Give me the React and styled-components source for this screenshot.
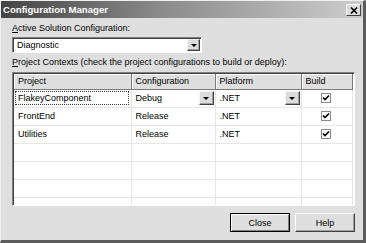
import React from 'react';
import styled, { createGlobalStyle } from 'styled-components';

const GlobalStyle = createGlobalStyle`
  html, body {
    margin: 0;
    padding: 0;
    background: #dfdfdf;
  }
  body {
    font-family: "Liberation Sans", Arial, sans-serif;
    font-size: 9px;
    color: #000;
  }
`;

const Window = styled.div`
  width: 366px;
  height: 243px;
  box-sizing: border-box;
  background: #dfdfdf;
  border-top: 1px solid #f0f0f0;
  border-left: 1px solid #f0f0f0;
  border-right: 3px solid #5c5c5c;
  border-bottom: 3px solid #5c5c5c;
  display: flex;
  flex-direction: column;
`;

const TitleBar = styled.div`
  height: 17px;
  display: flex;
  align-items: center;
  justify-content: space-between;
  padding: 0 2px 0 2px;
  background: linear-gradient(to right, #444 0%, #8c8c8c 45%, #cdcdcd 100%);
`;

const Title = styled.span`
  color: #fff;
  font-weight: bold;
  font-size: 9.6px;
`;

const CloseBox = styled.div`
  width: 15px;
  height: 12px;
  box-sizing: border-box;
  background: #dcdcdc;
  border: 1px solid;
  border-color: #fff #404040 #404040 #fff;
  display: flex;
  align-items: center;
  justify-content: center;
  margin-top: 1px;
`;

const Body = styled.div`
  flex: 1;
  display: flex;
  flex-direction: column;
  padding: 0 9px 0 11px;
`;

const Label = styled.div`
  height: 11px;
  line-height: 11px;
  margin-top: ${p => p.$top}px;
  white-space: nowrap;
`;

const Combo = styled.div`
  margin-top: 3px;
  width: 190px;
  height: 16px;
  box-sizing: border-box;
  background: #fff;
  border: 1px solid;
  border-color: #808080 #fff #fff #808080;
  box-shadow: inset 1px 1px 0 #404040;
  display: flex;
  align-items: center;
  justify-content: space-between;
  padding: 0 1px 0 4px;
`;

const DropButton = styled.div`
  width: ${p => p.$w}px;
  height: ${p => p.$h}px;
  box-sizing: border-box;
  background: #dcdcdc;
  border: 1px solid;
  border-color: #f4f4f4 #404040 #404040 #f4f4f4;
  box-shadow: inset -1px -1px 0 #a0a0a0;
  display: flex;
  align-items: center;
  justify-content: center;
  flex-shrink: 0;
`;

const Arrow = styled.span`
  width: 0;
  height: 0;
  border-left: 3px solid transparent;
  border-right: 3px solid transparent;
  border-top: 3px solid #000;
`;

const GridBox = styled.div`
  margin-top: 4px;
  width: 343px;
  height: 134px;
  box-sizing: border-box;
  background: #fff;
  border: 1px solid;
  border-color: #808080 #fff #fff #808080;
  box-shadow: inset 1px 1px 0 #404040;
  padding: 1px 0 0 1px;
  overflow: hidden;
`;

const Table = styled.table`
  border-collapse: collapse;
  table-layout: fixed;
  width: 338px;
`;

const Head = styled.th`
  width: ${p => p.$w}px;
  height: 15px;
  box-sizing: border-box;
  padding: 0 0 0 4px;
  text-align: left;
  font-weight: normal;
  background: #dfdfdf;
  border-right: 1px solid #7a7a7a;
  border-bottom: 1px solid #7a7a7a;
  box-shadow: inset 1px 1px 0 #fff;
  white-space: nowrap;
`;

const Cell = styled.td`
  height: 18px;
  box-sizing: border-box;
  padding: 0 1px 0 ${p => (p.$center ? 0 : 4)}px;
  border-right: 1px solid #e6e6e6;
  border-bottom: 1px solid #e6e6e6;
  text-align: ${p => (p.$center ? 'center' : 'left')};
  vertical-align: middle;
  white-space: nowrap;
`;

const FocusText = styled.div`
  margin-left: -3px;
  margin-right: 1px;
  height: 14px;
  line-height: 12px;
  box-sizing: border-box;
  padding-left: 2px;
  border: 1px dotted #404040;
`;

const CellCombo = styled.div`
  display: flex;
  align-items: center;
  justify-content: space-between;
`;

const Check = styled.span`
  display: inline-flex;
  align-items: center;
  justify-content: center;
  width: 10px;
  height: 10px;
  box-sizing: border-box;
  border: 1px solid #8a8a8a;
  background: #fff;
  vertical-align: middle;
`;

const Footer = styled.div`
  margin-top: 7px;
  width: 343px;
  display: flex;
  justify-content: flex-end;
  gap: 5px;
`;

const Button = styled.button`
  width: 60px;
  height: 19px;
  box-sizing: border-box;
  font-family: inherit;
  font-size: 9px;
  color: #000;
  background: #dfdfdf;
  padding: 0;
  border: 1px solid;
  border-color: ${p => (p.$default ? '#000' : '#fff #404040 #404040 #fff')};
  box-shadow: ${p =>
    p.$default
      ? 'inset 1px 1px 0 #fff, inset -1px -1px 0 #808080'
      : 'inset -1px -1px 0 #a0a0a0'};
`;

function CheckMark() {
  return (
    <svg width="8" height="8" viewBox="0 0 8 8">
      <path d="M1 3.5 L3 5.5 L7 1.5" stroke="#000" strokeWidth="1.6" fill="none" />
    </svg>
  );
}

const rows = [
  { project: 'FlakeyComponent', config: 'Debug', platform: '.NET', active: true },
  { project: 'FrontEnd', config: 'Release', platform: '.NET' },
  { project: 'Utilities', config: 'Release', platform: '.NET' },
];

export default function App() {
  return (
    <>
      <GlobalStyle />
      <Window>
        <TitleBar>
          <Title>Configuration Manager</Title>
          <CloseBox>
            <svg width="8" height="7" viewBox="0 0 8 7">
              <path d="M1 0.5 L7 6.5 M7 0.5 L1 6.5" stroke="#000" strokeWidth="1.5" />
            </svg>
          </CloseBox>
        </TitleBar>
        <Body>
          <Label $top={5}>
            <u>A</u>ctive Solution Configuration:
          </Label>
          <Combo>
            <span>Diagnostic</span>
            <DropButton $w={13} $h={12}>
              <Arrow />
            </DropButton>
          </Combo>
          <Label $top={4}>
            <u>P</u>roject Contexts (check the project configurations to build or deploy):
          </Label>
          <GridBox>
            <Table>
              <thead>
                <tr>
                  <Head $w={117}>Project</Head>
                  <Head $w={84}>Configuration</Head>
                  <Head $w={86}>Platform</Head>
                  <Head $w={51}>Build</Head>
                </tr>
              </thead>
              <tbody>
                {rows.map(r => (
                  <tr key={r.project}>
                    <Cell>{r.active ? <FocusText>{r.project}</FocusText> : r.project}</Cell>
                    <Cell>
                      {r.active ? (
                        <CellCombo>
                          {r.config}
                          <DropButton $w={15} $h={14}>
                            <Arrow />
                          </DropButton>
                        </CellCombo>
                      ) : (
                        r.config
                      )}
                    </Cell>
                    <Cell>
                      {r.active ? (
                        <CellCombo>
                          {r.platform}
                          <DropButton $w={15} $h={14}>
                            <Arrow />
                          </DropButton>
                        </CellCombo>
                      ) : (
                        r.platform
                      )}
                    </Cell>
                    <Cell $center>
                      <Check>
                        <CheckMark />
                      </Check>
                    </Cell>
                  </tr>
                ))}
                {[0, 1, 2, 3].map(i => (
                  <tr key={i}>
                    <Cell />
                    <Cell />
                    <Cell />
                    <Cell />
                  </tr>
                ))}
              </tbody>
            </Table>
          </GridBox>
          <Footer>
            <Button $default>Close</Button>
            <Button>Help</Button>
          </Footer>
        </Body>
      </Window>
    </>
  );
}
